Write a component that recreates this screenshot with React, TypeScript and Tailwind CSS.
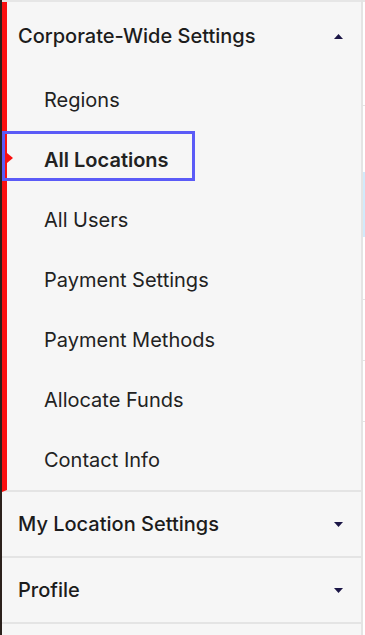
import React from 'react';

const subItems = [
  'Regions',
  'All Locations',
  'All Users',
  'Payment Settings',
  'Payment Methods',
  'Allocate Funds',
  'Contact Info',
];

const Caret = ({ up }: { up?: boolean }) => (
  <svg width="9" height="5" viewBox="0 0 9 5" className="shrink-0">
    {up ? <path d="M0 5 L4.5 0 L9 5 Z" fill="#1b1646" /> : <path d="M0 0 L9 0 L4.5 5 Z" fill="#1b1646" />}
  </svg>
);

function CollapsedRow({ label }: { label: string }) {
  return (
    <div className="flex h-[66px] items-center justify-between border-b-2 border-[#e4e4e4] pl-[16px] pr-[18px]">
      <span className="text-[20px] font-medium text-[#1c1c1c]">{label}</span>
      <Caret />
    </div>
  );
}

export default function App() {
  const active = 'All Locations';

  return (
    <div
      className="flex h-[635px] w-[365px] overflow-hidden bg-white"
      style={{ fontFamily: 'Inter, "Noto Sans", sans-serif' }}
    >
      <div className="w-[2px] shrink-0 bg-[#2b211c]" />

      <div className="flex w-[359px] shrink-0 flex-col border-t-2 border-[#e6e6e6] bg-[#f6f6f6]">
        <section className="relative flex flex-col border-b-2 border-l-[5px] border-b-[#e4e4e4] border-l-[#fa1010]">
          <div className="flex h-[68px] items-center justify-between pl-[11px] pr-[18px]">
            <span className="text-[20px] font-medium text-[#1c1c1c]">Corporate-Wide Settings</span>
            <Caret up />
          </div>

          {subItems.map((item) => (
            <div key={item} className="relative flex h-[60px] items-center pl-[37px]">
              {item === active && (
                <>
                  <span className="absolute -left-[5px] top-[1px] h-[50px] w-[193px] border-[3px] border-[#5b5bf7]" />
                  <span className="absolute left-0 top-[23px] h-0 w-0 border-y-[5px] border-l-[6px] border-y-transparent border-l-[#fa1010]" />
                </>
              )}
              <span
                className={`text-[20px] text-[#222222] ${item === active ? 'font-semibold' : 'font-normal'}`}
              >
                {item}
              </span>
            </div>
          ))}
        </section>

        <CollapsedRow label="My Location Settings" />
        <CollapsedRow label="Profile" />
      </div>

      <div className="w-[2px] shrink-0 bg-[#e4e4e4]" />

      <div className="flex flex-1 flex-col border-t-2 border-[#e6e6e6]">
        <div className="h-[104px] border-b border-[#e4e4e4]" />
        <div className="h-[66px]" />
        <div className="h-[65px] bg-[#d2eafa]" />
        <div className="h-[63px] border-b border-[#e4e4e4]" />
        <div className="h-[61px] border-b border-[#e4e4e4]" />
        <div className="h-[61px] border-b border-[#e4e4e4]" />
      </div>
    </div>
  );
}
